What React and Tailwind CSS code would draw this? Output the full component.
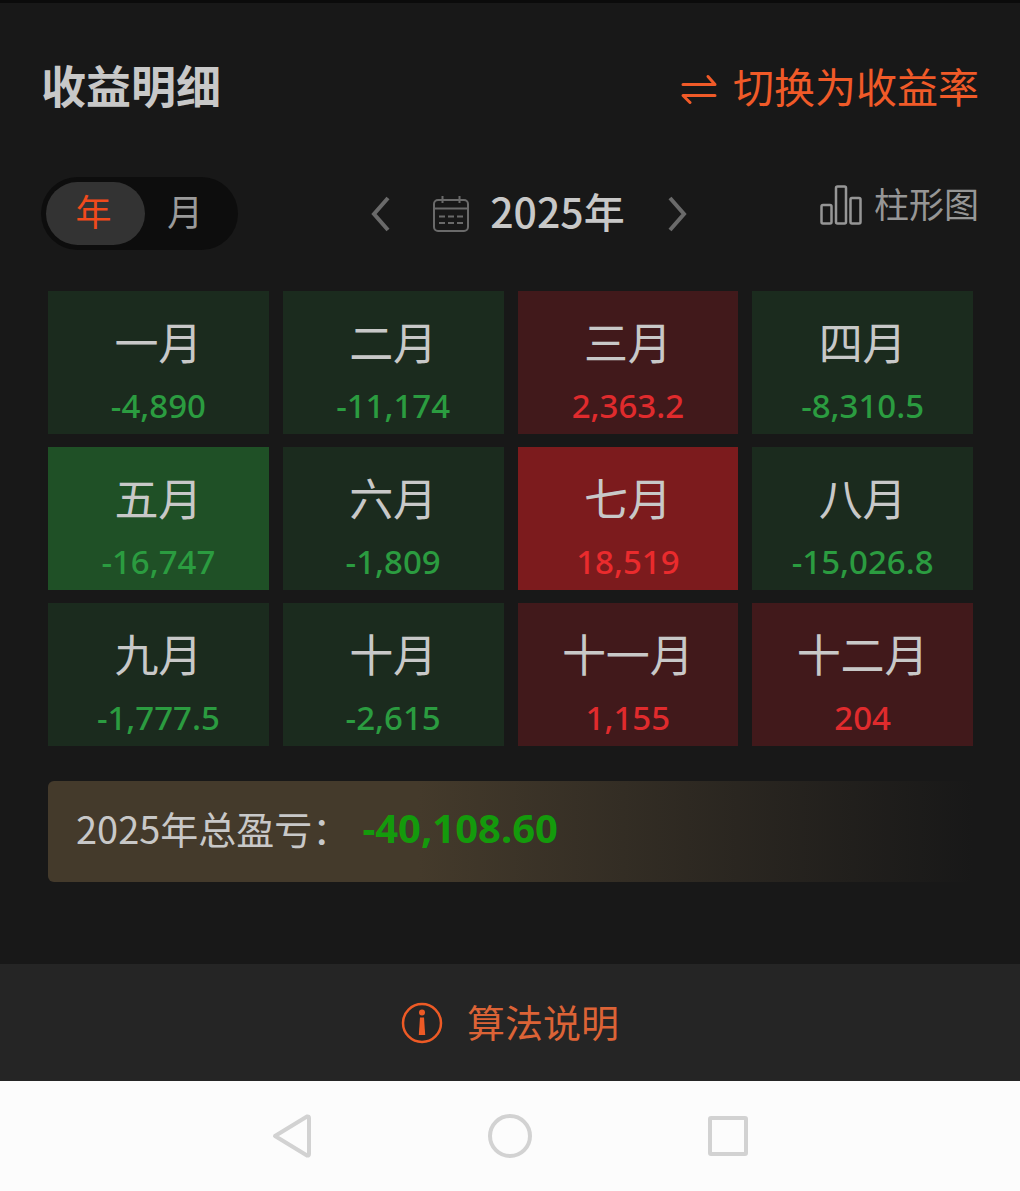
const months = [
  { name: '一月', value: '-4,890', tone: 'loss' },
  { name: '二月', value: '-11,174', tone: 'loss' },
  { name: '三月', value: '2,363.2', tone: 'gain' },
  { name: '四月', value: '-8,310.5', tone: 'loss' },
  { name: '五月', value: '-16,747', tone: 'lossStrong' },
  { name: '六月', value: '-1,809', tone: 'loss' },
  { name: '七月', value: '18,519', tone: 'gainStrong' },
  { name: '八月', value: '-15,026.8', tone: 'loss' },
  { name: '九月', value: '-1,777.5', tone: 'loss' },
  { name: '十月', value: '-2,615', tone: 'loss' },
  { name: '十一月', value: '1,155', tone: 'gain' },
  { name: '十二月', value: '204', tone: 'gain' },
];

const cellTone = {
  loss: 'bg-[#1b2b1e]',
  lossStrong: 'bg-[#1f5026]',
  gain: 'bg-[#41191b]',
  gainStrong: 'bg-[#7c1b1d]',
};

const valueTone = {
  loss: 'text-[#2b9c40]',
  lossStrong: 'text-[#2b9c40]',
  gain: 'text-[#e02b2d]',
  gainStrong: 'text-[#ea2b2d]',
};

function SwapIcon() {
  return (
    <svg width="36" height="30" viewBox="0 0 36 30" fill="none" stroke="currentColor" strokeWidth="3" strokeLinecap="round" strokeLinejoin="round" aria-hidden="true">
      <path d="M2 10.500H34L27 2.500" />
      <path d="M34 21.500H2L9 28.500" />
    </svg>
  );
}

function Chevron({ left }) {
  return (
    <svg width="20" height="36" viewBox="0 0 20 36" fill="none" stroke="currentColor" strokeWidth="4" aria-hidden="true">
      <path d={left ? 'M17 2L3 18L17 34' : 'M3 2L17 18L3 34'} />
    </svg>
  );
}

function CalendarIcon() {
  return (
    <svg width="36" height="36" viewBox="0 0 36 36" fill="none" stroke="currentColor" strokeWidth="2" aria-hidden="true">
      <rect x="1" y="4" width="34" height="31" rx="4" />
      <path d="M1 12.500H35M9.500 0V7M26.500 0V7" />
      <path d="M6 20.500H12M15 20.500H21M24 20.500H30M6 27H12M15 27H21M24 27H30" />
    </svg>
  );
}

function BarsIcon() {
  return (
    <svg width="42" height="40" viewBox="0 0 42 40" fill="none" stroke="currentColor" strokeWidth="2.500" aria-hidden="true">
      <rect x="1.500" y="20" width="10" height="18.500" rx="1.500" />
      <rect x="16" y="1.500" width="10" height="37" rx="1.500" />
      <rect x="30.500" y="13" width="10" height="25.500" rx="1.500" />
    </svg>
  );
}

function InfoIcon() {
  return (
    <svg width="42" height="42" viewBox="0 0 42 42" aria-hidden="true">
      <circle cx="21" cy="21" r="19" fill="none" stroke="currentColor" strokeWidth="2.500" />
      <circle cx="21" cy="10.500" r="3" fill="currentColor" />
      <path d="M19 15.500H23L24.200 33H17.800Z" fill="currentColor" />
    </svg>
  );
}

export default function App() {
  return (
    <div className="flex min-h-screen flex-col bg-[#181818] font-['Noto_Sans_CJK_SC',sans-serif] text-[#c8c8c8]">
      <main className="flex-1 border-t-3 border-[#0b0b0b] px-[41px] pb-[82px]">
        <header className="flex items-center justify-between pt-[52px]">
          <h1 className="text-[45px] leading-[60px] font-bold">收益明细</h1>
          <button type="button" className="flex items-center gap-4 text-[41px] leading-[60px] text-[#f05a28]">
            <span className="pt-2"><SwapIcon /></span>
            切换为收益率
          </button>
        </header>

        <div className="mt-[62px] flex items-start justify-between">
          <div className="flex rounded-full bg-[#0d0d0d] p-[5px] text-[36px]">
            <button type="button" aria-pressed="true" className="flex h-[63px] w-[99px] items-center justify-center rounded-full bg-[#333333] pr-1 pb-2 text-[#f04a1c]">年</button>
            <button type="button" aria-pressed="false" className="flex h-[63px] w-[88px] items-center justify-center pr-2 pb-2 text-[#9a9a9a]">月</button>
          </div>

          <div className="flex h-[73px] items-center">
            <button type="button" aria-label="上一年" className="text-[#6a6a6a]"><Chevron left /></button>
            <button type="button" className="mx-[42px] flex items-center gap-[21px] text-[41px] leading-[60px] font-medium">
              <span className="text-[#6a6a6a]"><CalendarIcon /></span>
              <span className="pb-2">2025年</span>
            </button>
            <button type="button" aria-label="下一年" className="text-[#6a6a6a]"><Chevron /></button>
          </div>

          <button type="button" className="flex items-center gap-3 text-[35px] leading-[52px] text-[#969696]">
            <BarsIcon />
            <span className="pb-1">柱形图</span>
          </button>
        </div>

        <section className="pt-[41px] pr-[6px] pl-[7px]">
          <ul className="grid grid-cols-4 gap-x-[14px] gap-y-[13px]">
            {months.map((m) => (
              <li key={m.name} className={`flex h-[143px] flex-col items-center pt-[18px] ${cellTone[m.tone]}`}>
                <span className="text-[44px] leading-[64px]">{m.name}</span>
                <span className={`font-['Noto_Sans'] text-[33px] leading-[66px] font-medium ${valueTone[m.tone]}`}>{m.value}</span>
              </li>
            ))}
          </ul>

          <p className="mt-[35px] flex h-[101px] items-center rounded-md bg-linear-to-r from-[#443a2b] from-40% to-[#181818] pb-2 pl-7 text-[38px]">
            2025年总盈亏：
            <strong className="ml-3 font-['Noto_Sans'] text-[40px] font-bold text-[#149a0c]">-40,108.60</strong>
          </p>
        </section>
      </main>

      <footer>
        <button type="button" className="flex h-[117px] w-full items-center justify-center gap-6 bg-[#252525] text-[38px] text-[#dc6336]">
          <span className="text-[#ee5a25]"><InfoIcon /></span>
          <span className="pb-1">算法说明</span>
        </button>
        <nav className="flex h-[110px] items-center justify-center gap-[175px] bg-[#fcfcfc] text-[#d2d2d2]">
          <button type="button" aria-label="返回">
            <svg width="40" height="46" viewBox="0 0 40 46" fill="none" stroke="currentColor" strokeWidth="4" strokeLinejoin="round" aria-hidden="true">
              <path d="M3 23L35 3.500Q37 3 37 5V41Q37 43 35 42.500Z" />
            </svg>
          </button>
          <button type="button" aria-label="主屏幕">
            <svg width="46" height="46" viewBox="0 0 46 46" fill="none" stroke="currentColor" strokeWidth="4" aria-hidden="true">
              <circle cx="23" cy="23" r="20" />
            </svg>
          </button>
          <button type="button" aria-label="最近任务">
            <svg width="40" height="40" viewBox="0 0 40 40" fill="none" stroke="currentColor" strokeWidth="4" strokeLinejoin="round" aria-hidden="true">
              <rect x="2" y="2" width="36" height="36" rx="1" />
            </svg>
          </button>
        </nav>
      </footer>
    </div>
  );
}
